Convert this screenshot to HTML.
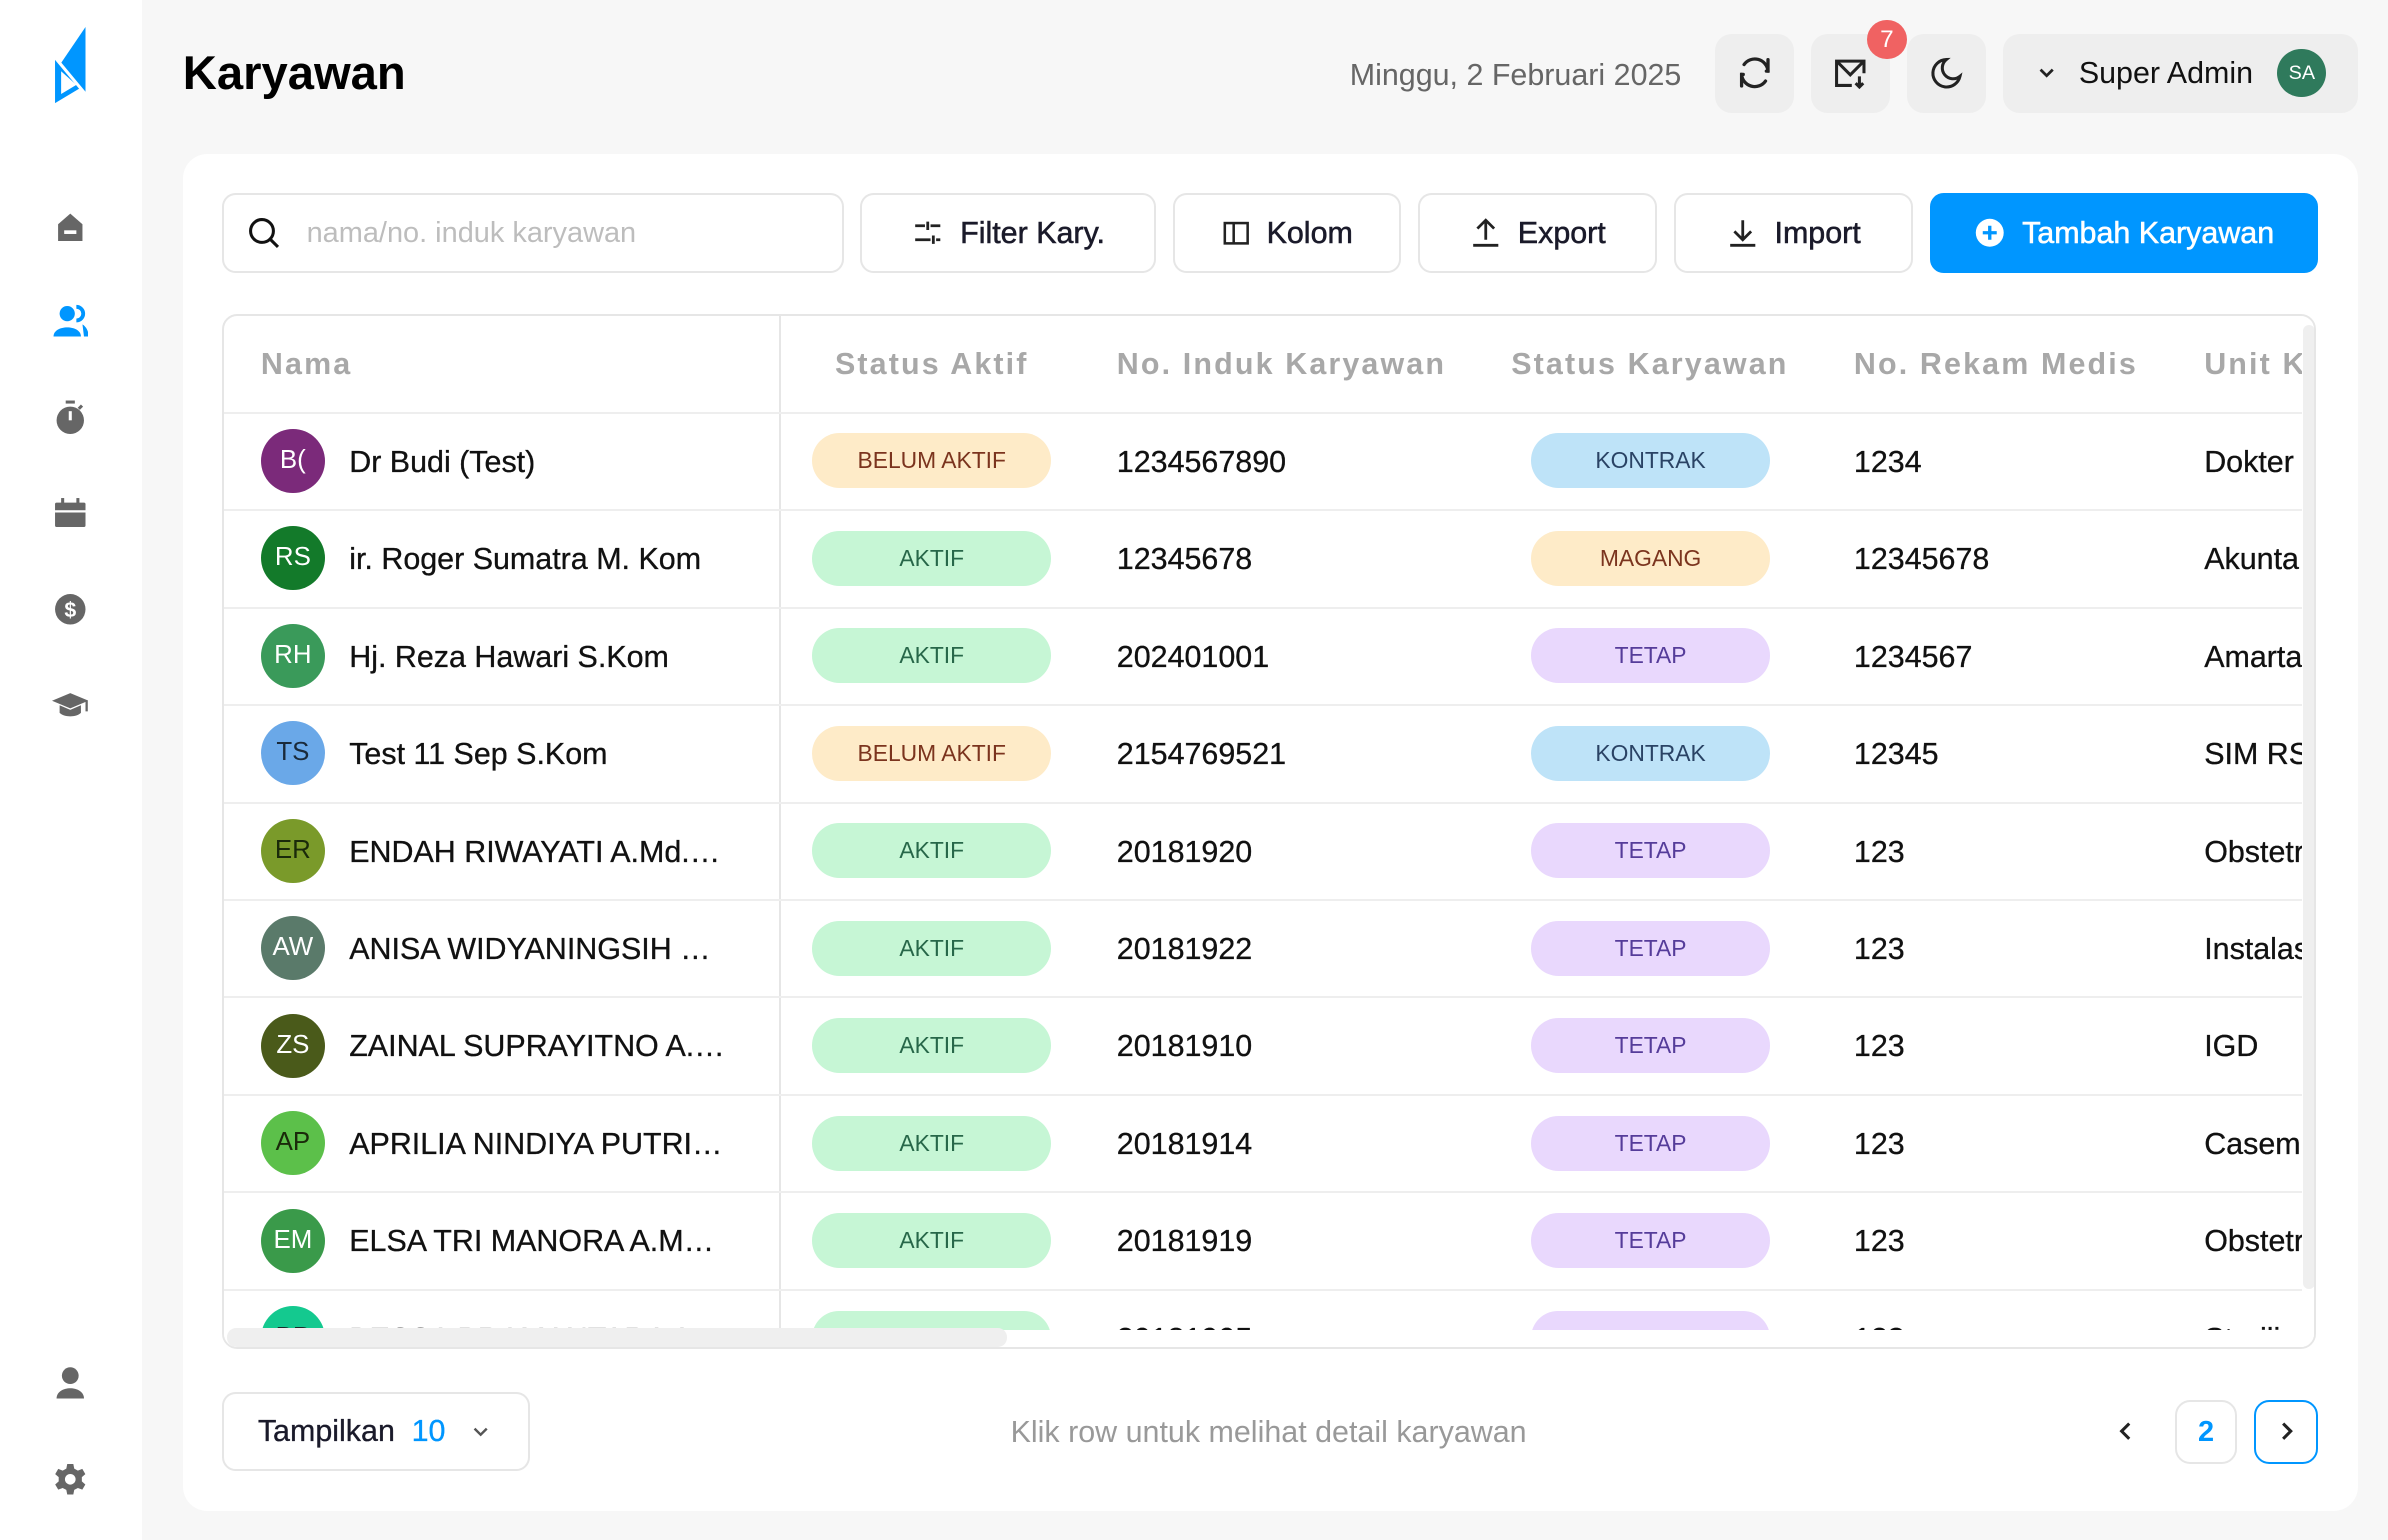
<!DOCTYPE html>
<html><head><meta charset="utf-8"><style>
*{box-sizing:border-box;margin:0;padding:0}
html,body{width:2388px;height:1540px;overflow:hidden;background:#f7f7f7}
#r{position:absolute;left:0;top:0;width:1568px;height:1011px;zoom:1.52296;font-family:"Liberation Sans",Arial,sans-serif;color:#111;background:#f7f7f7}
.a{position:absolute}
.side{left:0;top:0;width:93px;height:1011px;background:#fff}
.ic{position:absolute;left:34px;width:24px;height:24px}
.hb{position:absolute;top:22px;height:52px;background:#eeeeee;border-radius:11px;display:flex;align-items:center;justify-content:center}
.card{left:120px;top:101px;width:1428px;height:891px;background:#fff;border-radius:16px}
.btn{position:absolute;top:127px;height:52px;border:1.5px solid #e6e6e6;border-radius:9px;background:#fff;display:flex;align-items:center;justify-content:center;gap:10px;font-size:20px;color:#1a1a2a;-webkit-text-stroke:0.35px currentColor}
.tbl{left:146px;top:206px;width:1375px;height:680px;border:1.5px solid #e6e6e6;border-radius:10px;overflow:hidden}
.th{position:absolute;top:0;height:64px;line-height:64px;font-size:20px;font-weight:bold;color:#a8a8a8;letter-spacing:1.4px}
.row{position:absolute;left:0;width:1375px;height:64px;border-top:1.5px solid #eeeeee;font-size:20px}
.row>div{position:absolute;top:0;height:64px;line-height:64px;white-space:nowrap;-webkit-text-stroke:0.2px #111}
.row>div.av{width:42px;height:42px;border-radius:50%;top:10px;line-height:42px;text-align:center;font-size:17px;left:24px;-webkit-text-stroke:0}
.row>div.bd{width:157px;height:36px;top:13px;line-height:36px;border-radius:18px;text-align:center;font-size:15px;-webkit-text-stroke:0}
.ba{left:386px}.bk{left:858px}
.g{background:#c6f6d5;color:#276749}.o{background:#feebc8;color:#7b341e}.b{background:#bee3f8;color:#2a4365}.p{background:#e9d8fd;color:#553c9a}
</style></head><body><div id="r">
<div class="a side"></div>
<svg class="a" style="left:34px;top:16px" width="24" height="54" viewBox="0 0 24 54"><path d="M22 2 L22 46 L3 30 Z" fill="#0096ff"/><path d="M2 22 L22 40 L2 52 Z" fill="#0096ff"/><path d="M6 31 L16 40 L6 46 Z" fill="#fff"/><path d="M2 22 L22 46" stroke="#fff" stroke-width="2"/></svg>
<svg class="ic" style="top:137px" viewBox="0 0 24 24"><path d="M12 3 L20 10 V21 H4 V10 Z" fill="#666"/><rect x="8" y="14" width="8" height="2.4" fill="#fff"/></svg>
<svg class="ic" style="top:199px" viewBox="0 0 24 24"><circle cx="10" cy="7" r="5" fill="#0096ff"/><path d="M1 22 C1 14 19 14 19 22Z" fill="#0096ff"/><path d="M16 2.5 A4.5 4.5 0 0 1 16 11.5" stroke="#0096ff" stroke-width="2.5" fill="none"/><path d="M20 14 C23 16 24 19 24 22 H21" fill="#0096ff"/></svg>
<svg class="ic" style="top:262px" viewBox="0 0 24 24"><rect x="9" y="1" width="6" height="2" fill="#666"/><circle cx="12" cy="14" r="9" fill="#666"/><rect x="11" y="8" width="2" height="6" fill="#fff"/><rect x="18" y="4" width="2" height="3" fill="#666" transform="rotate(45 19 5)"/></svg>
<svg class="ic" style="top:325px" viewBox="0 0 24 24"><rect x="2" y="5" width="20" height="16" rx="1" fill="#666"/><rect x="2" y="10" width="20" height="1.5" fill="#fff"/><rect x="6" y="2" width="2" height="5" fill="#666"/><rect x="16" y="2" width="2" height="5" fill="#666"/></svg>
<svg class="ic" style="top:388px" viewBox="0 0 24 24"><circle cx="12" cy="12" r="10" fill="#666"/><text x="12" y="17" font-size="14" font-weight="bold" text-anchor="middle" fill="#fff" font-family="Liberation Sans">$</text></svg>
<svg class="ic" style="top:451px" viewBox="0 0 24 24"><path d="M0 9 L12 4 L24 9 L12 14 Z" fill="#666"/><path d="M5 12 V17 C8 20 16 20 19 17 V12 L12 15 Z" fill="#666"/><rect x="22" y="9" width="1.5" height="7" fill="#666"/></svg>
<svg class="ic" style="top:896px" viewBox="0 0 24 24"><circle cx="12" cy="7" r="5.5" fill="#666"/><path d="M3 22 C3 13 21 13 21 22Z" fill="#666"/></svg>
<svg class="ic" style="top:959px" viewBox="0 0 24 24"><path d="M10 2h4l.6 3 2.4 1.3 2.9-1.1 2 3.4-2.3 2v2.8l2.3 2-2 3.4-2.9-1.1L14.6 19 14 22h-4l-.6-3-2.4-1.3-2.9 1.1-2-3.4 2.3-2V10.6l-2.3-2 2-3.4 2.9 1.1L9.4 5Z" fill="#666"/><circle cx="12" cy="12" r="3.5" fill="#fff"/></svg>

<div class="a" style="left:120px;top:30px;font-size:31px;font-weight:bold;color:#000">Karyawan</div>
<div class="a" style="right:464px;top:38px;font-size:20px;color:#666">Minggu, 2 Februari 2025</div>
<div class="hb" style="left:1126px;width:52px"><svg width="26" height="26" viewBox="0 0 24 24" fill="none" stroke="#222" stroke-width="2" stroke-linecap="round"><path d="M20 11 A8 8 0 0 0 5.5 7"/><path d="M4 13 A8 8 0 0 0 18.5 17"/><path d="M20 4v7h-1"/><path d="M4 20v-7h1"/></svg></div>
<div class="hb" style="left:1189px;width:52px"><svg width="24" height="24" viewBox="0 0 24 24" fill="none" stroke="#222" stroke-width="2"><path d="M13 20H3V4h18v8"/><path d="M3 4l9 9 9-9"/><path d="M18 14v7M15.5 18.5L18 21l2.5-2.5"/></svg></div>
<div class="a" style="left:1226px;top:13px;width:26px;height:26px;border-radius:50%;background:#f06262;color:#fff;font-size:16px;text-align:center;line-height:26px">7</div>
<div class="hb" style="left:1252px;width:52px"><svg width="24" height="24" viewBox="0 0 24 24" fill="none" stroke="#222" stroke-width="2"><path d="M12 3a9 9 0 1 0 9 11A7 7 0 0 1 12 3z"/></svg></div>
<div class="hb" style="left:1315px;width:233px;justify-content:flex-start;padding-left:22px"><svg width="14" height="14" viewBox="0 0 14 14" fill="none" stroke="#222" stroke-width="1.8"><path d="M3 5l4 4 4-4"/></svg><span style="font-size:20px;margin-left:14px;color:#111">Super Admin</span><span style="margin-left:16px;width:32px;height:32px;border-radius:50%;background:#2f7a5c;color:#fff;font-size:13px;text-align:center;line-height:32px">SA</span></div>

<div class="a card"></div>
<div class="btn" style="left:146px;width:408px;justify-content:flex-start;padding-left:14px;gap:16px;-webkit-text-stroke:0"><svg width="24" height="24" viewBox="0 0 24 24" fill="none" stroke="#111" stroke-width="2"><circle cx="10.5" cy="10.5" r="7.5"/><path d="M16 16l5 5"/></svg><span style="color:#bdbdbd;font-size:19px">nama/no. induk karyawan</span></div>
<div class="btn" style="left:565px;width:194px"><svg width="22" height="22" viewBox="0 0 24 24" fill="none" stroke="#222" stroke-width="2"><path d="M3 7h7M14 7h7M3 17h11M18 17h3M12 4v6M16 14v6"/></svg>Filter Kary.</div>
<div class="btn" style="left:770px;width:150px"><svg width="20" height="20" viewBox="0 0 24 24" fill="none" stroke="#222" stroke-width="2"><rect x="3" y="4" width="18" height="16"/><path d="M10 4v16"/></svg>Kolom</div>
<div class="btn" style="left:931px;width:157px"><svg width="22" height="22" viewBox="0 0 24 24" fill="none" stroke="#222" stroke-width="2"><path d="M12 17V3M6 9l6-6 6 6M3 21h18"/></svg>Export</div>
<div class="btn" style="left:1099px;width:157px"><svg width="22" height="22" viewBox="0 0 24 24" fill="none" stroke="#222" stroke-width="2"><path d="M12 3v14M6 11l6 6 6-6M3 21h18"/></svg>Import</div>
<div class="btn" style="left:1267px;width:255px;background:#0096ff;border-color:#0096ff;color:#fff"><svg width="22" height="22" viewBox="0 0 24 24"><circle cx="12" cy="12" r="10" fill="#fff"/><path d="M12 7v10M7 12h10" stroke="#0096ff" stroke-width="2.4"/></svg>Tambah Karyawan</div>

<div class="a tbl">
<div class="th" style="left:24px">Nama</div>
<div class="th" style="left:386px;width:157px;text-align:center">Status Aktif</div>
<div class="th" style="left:586px">No. Induk Karyawan</div>
<div class="th" style="left:845px">Status Karyawan</div>
<div class="th" style="left:1070px">No. Rekam Medis</div>
<div class="th" style="left:1300px">Unit K</div>
<div class="a" style="left:364px;top:0;width:1.5px;height:680px;background:#e6e6e6"></div>

<div class="row" style="top:63px"><div class="av" style="background:#7b2a7a;color:#fff">B(</div><div style="left:82px">Dr Budi (Test)</div><div class="bd ba o">BELUM AKTIF</div><div style="left:586px">1234567890</div><div class="bd bk b">KONTRAK</div><div style="left:1070px">1234</div><div style="left:1300px">Dokter</div></div>
<div class="row" style="top:127px"><div class="av" style="background:#137a2a;color:#fff">RS</div><div style="left:82px">ir. Roger Sumatra M. Kom</div><div class="bd ba g">AKTIF</div><div style="left:586px">12345678</div><div class="bd bk o">MAGANG</div><div style="left:1070px">12345678</div><div style="left:1300px">Akunta</div></div>
<div class="row" style="top:191px"><div class="av" style="background:#3a9a5a;color:#fff">RH</div><div style="left:82px">Hj. Reza Hawari S.Kom</div><div class="bd ba g">AKTIF</div><div style="left:586px">202401001</div><div class="bd bk p">TETAP</div><div style="left:1070px">1234567</div><div style="left:1300px">Amarta</div></div>
<div class="row" style="top:255px"><div class="av" style="background:#6aa8e8;color:#1a2a3a">TS</div><div style="left:82px">Test 11 Sep S.Kom</div><div class="bd ba o">BELUM AKTIF</div><div style="left:586px">2154769521</div><div class="bd bk b">KONTRAK</div><div style="left:1070px">12345</div><div style="left:1300px">SIM RS</div></div>
<div class="row" style="top:319px"><div class="av" style="background:#7a9a2a;color:#1a2a0a">ER</div><div style="left:82px">ENDAH RIWAYATI A.Md.…</div><div class="bd ba g">AKTIF</div><div style="left:586px">20181920</div><div class="bd bk p">TETAP</div><div style="left:1070px">123</div><div style="left:1300px">Obstetri</div></div>
<div class="row" style="top:383px"><div class="av" style="background:#5a7a6a;color:#fff">AW</div><div style="left:82px">ANISA WIDYANINGSIH …</div><div class="bd ba g">AKTIF</div><div style="left:586px">20181922</div><div class="bd bk p">TETAP</div><div style="left:1070px">123</div><div style="left:1300px">Instalasi</div></div>
<div class="row" style="top:447px"><div class="av" style="background:#4a5a1a;color:#fff">ZS</div><div style="left:82px">ZAINAL SUPRAYITNO A.…</div><div class="bd ba g">AKTIF</div><div style="left:586px">20181910</div><div class="bd bk p">TETAP</div><div style="left:1070px">123</div><div style="left:1300px">IGD</div></div>
<div class="row" style="top:511px"><div class="av" style="background:#5cc04a;color:#1a2a0a">AP</div><div style="left:82px">APRILIA NINDIYA PUTRI…</div><div class="bd ba g">AKTIF</div><div style="left:586px">20181914</div><div class="bd bk p">TETAP</div><div style="left:1070px">123</div><div style="left:1300px">Casem</div></div>
<div class="row" style="top:575px"><div class="av" style="background:#3a9a4a;color:#fff">EM</div><div style="left:82px">ELSA TRI MANORA A.M…</div><div class="bd ba g">AKTIF</div><div style="left:586px">20181919</div><div class="bd bk p">TETAP</div><div style="left:1070px">123</div><div style="left:1300px">Obstetri</div></div>
<div class="row" style="top:639px"><div class="av" style="background:#14c98f;color:#1a2a2a">BP</div><div style="left:82px">BESSA PRAMANTARA A…</div><div class="bd ba g">AKTIF</div><div style="left:586px">20181905</div><div class="bd bk p">TETAP</div><div style="left:1070px">123</div><div style="left:1300px">Sterilis</div></div>
<div class="a" style="left:0;top:666px;width:1375px;height:20px;background:#fff"></div>
<div class="a" style="left:1364px;top:0;width:11px;height:680px;background:#fff"></div>
<div class="a" style="left:1365px;top:6px;width:8px;height:633px;background:#efefef;border-radius:4px"></div>
<div class="a" style="left:2px;top:665px;width:512px;height:12px;background:#efefef;border-radius:6px"></div>
</div>

<div class="btn" style="left:146px;top:914px;width:202px;justify-content:flex-start;padding-left:22px;gap:0;-webkit-text-stroke:0.2px currentColor"><span style="color:#1a1a2a">Tampilkan</span><span style="color:#0096ff;margin-left:11px">10</span><svg style="margin-left:16px" width="14" height="14" viewBox="0 0 14 14" fill="none" stroke="#555" stroke-width="1.6"><path d="M3 5l4 4 4-4"/></svg></div>
<div class="a" style="left:560px;top:929px;width:546px;text-align:center;font-size:20px;color:#999">Klik row untuk melihat detail karyawan</div>
<svg class="a" style="left:1388px;top:932px" width="16" height="16" viewBox="0 0 16 16" fill="none" stroke="#222" stroke-width="2"><path d="M10 3L5 8l5 5"/></svg>
<div class="a" style="left:1428px;top:919px;width:41px;height:42px;border:1.5px solid #e6e6e6;border-radius:10px;text-align:center;line-height:40px;color:#0096ff;font-weight:bold;font-size:19px">2</div>
<div class="a" style="left:1480px;top:919px;width:42px;height:42px;border:1.5px solid #0096ff;border-radius:10px;display:flex;align-items:center;justify-content:center"><svg width="16" height="16" viewBox="0 0 16 16" fill="none" stroke="#222" stroke-width="2"><path d="M6 3l5 5-5 5"/></svg></div>
</div></body></html>
